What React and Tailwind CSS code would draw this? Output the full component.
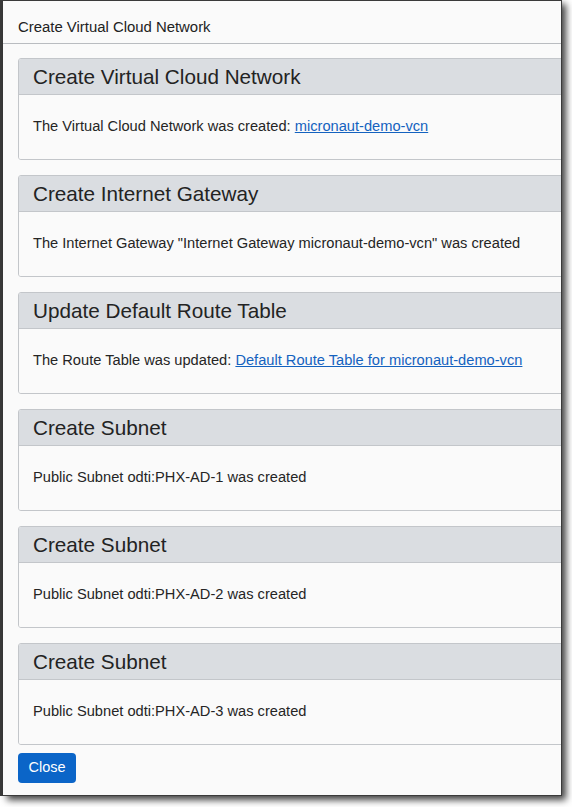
import React from "react";

const steps = [
  {
    title: "Create Virtual Cloud Network",
    text: "The Virtual Cloud Network was created: ",
    link: "micronaut-demo-vcn",
  },
  {
    title: "Create Internet Gateway",
    text: 'The Internet Gateway "Internet Gateway micronaut-demo-vcn" was created',
  },
  {
    title: "Update Default Route Table",
    text: "The Route Table was updated: ",
    link: "Default Route Table for micronaut-demo-vcn",
  },
  { title: "Create Subnet", text: "Public Subnet odti:PHX-AD-1 was created" },
  { title: "Create Subnet", text: "Public Subnet odti:PHX-AD-2 was created" },
  { title: "Create Subnet", text: "Public Subnet odti:PHX-AD-3 was created" },
];

function StepCard({ step }) {
  return (
    <div className="border border-[#c3c6ca] rounded-[3px] mr-[-12px] overflow-hidden">
      <div className="h-[36px] bg-[#dadde1] border-b border-[#c3c6ca] px-[14px] pt-[2px] flex items-center">
        <h2 className="text-[20.7px] leading-none text-[#232323]">{step.title}</h2>
      </div>
      <div className="h-[64px] px-[14px] flex items-center bg-[#fafafa]">
        <p className="text-[14.65px] text-[#252525]">
          {step.text}
          {step.link && (
            <a href="#" className="text-[#1462bf] underline">
              {step.link}
            </a>
          )}
        </p>
      </div>
    </div>
  );
}

export default function App() {
  return (
    <div
      className="min-h-[807px] bg-white flex items-start"
      style={{ fontFamily: '"Liberation Sans", Arial, sans-serif' }}
    >
      {/* page behind the modal */}
      <div className="w-[3px] h-[796px] bg-[#3b3b3b]"></div>

      {/* Modal */}
      <div className="w-[559px] h-[796px] bg-[#fafafa] border-r border-b border-t border-[#3a3a3a] shadow-[4px_4px_7px_rgba(0,0,0,0.75)] overflow-hidden flex flex-col">
        <div className="h-[43px] border-b border-[#b9bcc0] px-[15px] pb-[5px] flex items-end">
          <span className="text-[14.9px] text-[#222]">Create Virtual Cloud Network</span>
        </div>

        <div className="pt-[14px] pl-[15px] flex flex-col gap-[15px]">
          {steps.map((s, i) => (
            <StepCard key={i} step={s} />
          ))}
        </div>

        <div className="pl-[15px] pt-[8px]">
          <button className="w-[58px] h-[30px] bg-[#0b65c8] text-white text-[14.5px] rounded-[4px]">
            Close
          </button>
        </div>
      </div>
    </div>
  );
}
